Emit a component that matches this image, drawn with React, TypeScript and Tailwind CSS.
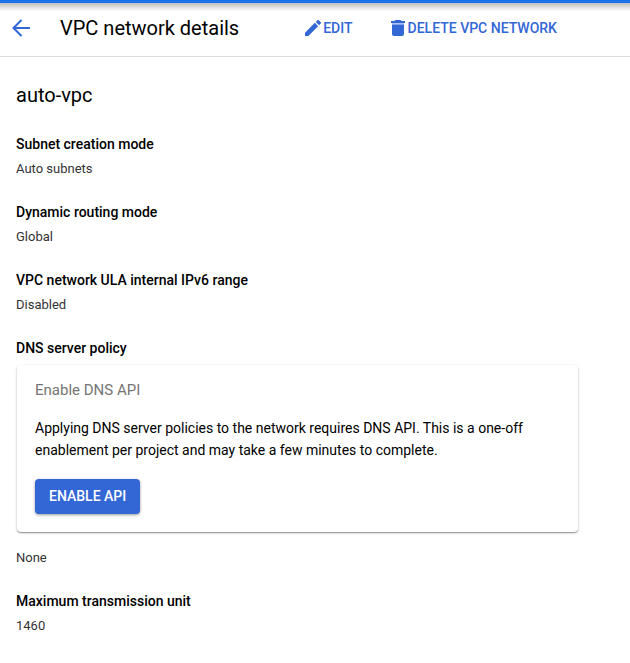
import type { ReactNode } from "react";

function ArrowBackIcon() {
  return (
    <svg width="18" height="18" viewBox="0 0 18 18" fill="none" stroke="currentColor" strokeWidth="2" aria-hidden="true">
      <path d="M18 9H1.5M9.5 1 1.5 9l8 8" />
    </svg>
  );
}

function PencilIcon() {
  return (
    <svg width="16" height="16" viewBox="3 3 18 18" fill="currentColor" aria-hidden="true">
      <path d="M3 17.25V21h3.75L17.81 9.94l-3.75-3.75L3 17.25zM20.71 7.04a1 1 0 0 0 0-1.41l-2.34-2.34a1 1 0 0 0-1.41 0l-1.83 1.83 3.75 3.75 1.83-1.83z" />
    </svg>
  );
}

function TrashIcon() {
  return (
    <svg width="14" height="16" viewBox="0 0 14 16" fill="currentColor" aria-hidden="true">
      <path d="M0 1h3.5l1-1h5l1 1H14v2H0z" />
      <path d="M1 3h12v1.5H1z" opacity="0.4" />
      <path d="M1 4.5h12V14a2 2 0 0 1-2 2H3a2 2 0 0 1-2-2z" />
    </svg>
  );
}

function Field({ label, children }: { label: string; children: ReactNode }) {
  return (
    <div>
      <dt className="text-sm leading-6 font-medium text-black">{label}</dt>
      <dd className="mt-px text-[13px] leading-6 text-[#333]">{children}</dd>
    </div>
  );
}

function ApiCard() {
  return (
    <section className="mb-3.5 ml-px max-w-[561px] rounded bg-white px-[18px] pt-[13px] pb-[18px] shadow-[0_1px_1px_rgba(0,0,0,0.3),0_1px_3px_rgba(0,0,0,0.2)]">
      <h3 className="text-[15px] leading-6 text-[#757575]">Enable DNS API</h3>
      <p className="mt-[15px] text-sm leading-[22px] text-black">
        Applying DNS server policies to the network requires DNS API. This is a one-off enablement per project and may
        take a few minutes to complete.
      </p>
      <button
        type="button"
        className="mt-[18px] block h-[35px] rounded bg-[#3367d6] px-3.5 pb-0.5 text-sm font-medium text-white shadow-[0_1px_3px_rgba(0,0,0,0.4)]"
      >
        ENABLE API
      </button>
    </section>
  );
}

export default function App() {
  return (
    <div className="min-h-screen bg-white font-['Roboto',sans-serif] text-black">
      <div className="h-[3px] bg-[#1a73e8]" />
      <header className="flex h-[54px] items-center border-b border-[#dcdcdc] bg-linear-to-b from-[#bdbdbd] to-white to-[8px] pb-[3px] pl-3 text-[#3367d6]">
        <button type="button" aria-label="Back">
          <ArrowBackIcon />
        </button>
        <h1 className="ml-[30px] text-xl text-black">VPC network details</h1>
        <button type="button" className="ml-[66px] flex items-center gap-0.5 text-sm font-medium">
          <PencilIcon />
          EDIT
        </button>
        <button type="button" className="ml-[38px] flex items-center gap-[3px] text-sm font-medium">
          <TrashIcon />
          DELETE VPC NETWORK
        </button>
      </header>
      <main className="px-4 pt-6 pb-6">
        <h2 className="text-xl leading-7">auto-vpc</h2>
        <dl className="mt-[23px] flex flex-col gap-[19px]">
          <Field label="Subnet creation mode">Auto subnets</Field>
          <Field label="Dynamic routing mode">Global</Field>
          <Field label="VPC network ULA internal IPv6 range">Disabled</Field>
          <Field label="DNS server policy">
            <div className="pt-1">
              <ApiCard />
              None
            </div>
          </Field>
          <Field label="Maximum transmission unit">1460</Field>
        </dl>
      </main>
    </div>
  );
}
